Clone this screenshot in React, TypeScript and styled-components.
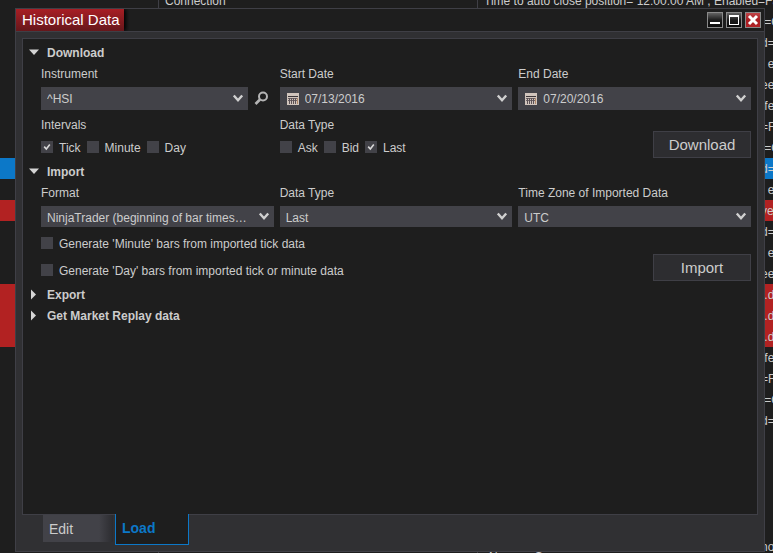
import React, { useState } from "react";
import styled, { createGlobalStyle, css } from "styled-components";

const color = {
  base: "#1e1e1e",
  frame: "#303033",
  line: "#3f3f46",
  field: "#424248",
  text: "#cccccc",
  blue: "#0c78c8",
  red: "#b22222",
};

const Global = createGlobalStyle`
  *, *::before, *::after { box-sizing: border-box; }
  html, body, #root { height: 100%; margin: 0; }
  body {
    background: ${color.base};
    color: ${color.text};
    font: 12px/22px "Liberation Sans", Arial, sans-serif;
    overflow: hidden;
  }
  button, input, select { font: inherit; color: inherit; margin: 0; }
`;

/* ---------- log behind the window ---------- */

const Desktop = styled.div`
  position: relative;
  height: 100%;
  min-height: 400px;
  overflow: hidden;
`;

const Log = styled.div`
  margin-top: -10px;
`;

type Tone = "plain" | "blue" | "red";

const LogRow = styled.div<{ $tone: Tone }>`
  display: grid;
  grid-template-columns: 158px 319px minmax(0, 1fr) 12px;
  grid-template-rows: 21px;
  height: 21px;
  white-space: pre;
  background: ${(p) =>
    p.$tone === "blue" ? color.blue : p.$tone === "red" ? color.red : color.base};
`;

const LogCell = styled.span`
  padding-left: 6px;
  overflow: hidden;
  border-left: 1px solid ${color.line};
  &:first-child {
    border-left: 0;
  }
`;

const WideCell = styled(LogCell)`
  grid-column: 3 / 5;
`;

const LogTail = styled.span`
  grid-column: 4;
  overflow: hidden;
`;

const NextLine = styled.div`
  margin-top: -11px;
  padding-left: 489px;
  white-space: pre;
`;

const tails: { text: string; tone?: Tone }[] = [
  { text: " =G" },
  { text: "d=" },
  { text: "  e" },
  { text: "ee" },
  { text: " fe" },
  { text: "=F" },
  { text: " =G" },
  { text: "d=", tone: "blue" },
  { text: "  e" },
  { text: "ve", tone: "red" },
  { text: "d=" },
  { text: "  e" },
  { text: "ee" },
  { text: " .d", tone: "red" },
  { text: " .d", tone: "red" },
  { text: " .d", tone: "red" },
  { text: " fe" },
  { text: "=F" },
  { text: " =G" },
  { text: "d=" },
  { text: "" },
  { text: "" },
  { text: "" },
  { text: "" },
  { text: "" },
  { text: "no" },
];

/* ---------- window frame ---------- */

const Window = styled.main`
  position: absolute;
  inset: 8px 8px 1px 15px;
  display: flex;
  flex-direction: column;
  background: ${color.frame};
  border: 1px solid ${color.line};
`;

const TitleBar = styled.header`
  display: flex;
  justify-content: space-between;
  height: 23px;
  background: ${color.base};
  border-bottom: 1px solid ${color.line};
`;

const Title = styled.h1`
  margin: 0;
  padding: 0 4px 0 6px;
  font-size: 15px;
  font-weight: 400;
  line-height: 22px;
  color: #fff;
  background: linear-gradient(#a81e24, #66171b);
  box-shadow: 2px 0 4px #000;
  clip-path: inset(0 -6px 0 0);
`;

const WindowButtons = styled.div`
  display: flex;
  gap: 3px;
  padding: 3px 3px 0 0;
`;

const WindowButton = styled.button<{ $close?: boolean }>`
  width: 16px;
  height: 16px;
  padding: 0;
  border: 1px solid #8a8a8a;
  background: ${(p) =>
    p.$close
      ? "linear-gradient(#c04448, #a81c20 50%, #b02226)"
      : "linear-gradient(#626262, #1c1c1c 50%, #0c0c0c)"};
  svg {
    display: block;
  }
`;

const Panel = styled.div`
  flex: 1;
  min-height: 0;
  margin: 6px 6px 0;
  padding: 3px 6px 0 0;
  background: ${color.base};
  border: 1px solid ${color.line};
`;

const Tabs = styled.nav`
  display: flex;
  align-items: flex-start;
  gap: 2px;
  margin-top: -1px;
  padding: 0 27px 6px;
`;

const Tab = styled.button<{ $active?: boolean }>`
  min-width: 70px;
  height: 27px;
  margin-top: 1px;
  padding: 0 6px;
  border: 0;
  text-align: left;
  font-size: 14px;
  background: linear-gradient(90deg, ${color.field} 80%, #2c2c30);
  ${(p) =>
    p.$active &&
    css`
      min-width: 74px;
      height: 31px;
      margin-top: 0;
      padding-bottom: 2px;
      color: ${color.blue};
      font-weight: 700;
      background: ${color.base};
      border: 1px solid ${color.blue};
      border-top: 0;
    `}
`;

/* ---------- form ---------- */

const SectionButton = styled.button`
  display: flex;
  align-items: center;
  gap: 7px;
  height: 21px;
  padding: 1px 0 0 5px;
  border: 0;
  background: none;
  font-weight: 700;
`;

const SectionBody = styled.div`
  display: grid;
  grid-template-columns: repeat(3, minmax(0, 1fr));
  column-gap: 6px;
  margin: 0 0 3px 18px;
`;

const Field = styled.div`
  display: flex;
  flex-direction: column;
  gap: 3px;
`;

const FieldLabel = styled.label`
  height: 21px;
`;

const ControlLine = styled.div`
  display: flex;
  align-items: center;
  gap: 6px;
  padding-right: 5px;
`;

const Control = styled.div<{ $tall?: boolean }>`
  display: grid;
  grid-template-columns: minmax(0, 1fr);
  grid-template-rows: 100%;
  flex: 1 0 auto;
  align-items: center;
  height: ${(p) => (p.$tall ? 23 : 21)}px;
  background: ${color.field};
  & > * {
    grid-area: 1 / 1;
  }
  & > svg {
    justify-self: end;
    margin-right: 4px;
    pointer-events: none;
  }
`;

const Select = styled.select`
  appearance: none;
  width: 100%;
  height: 100%;
  padding: 1px 25px 0 6px;
  border: 0;
  border-radius: 0;
  background: transparent;
  text-overflow: ellipsis;
  option {
    background: ${color.field};
  }
`;

const DateLabel = styled.label`
  display: flex;
  align-items: center;
  gap: 6px;
  padding: 0 20px 0 7px;
`;

const DateInput = styled.input`
  flex: 1;
  min-width: 0;
  height: 21px;
  padding: 1px 0 0;
  border: 0;
  background: transparent;
`;

const IconButton = styled.button`
  display: flex;
  padding: 0;
  border: 0;
  background: none;
`;

const CheckGroup = styled.fieldset`
  min-width: 0;
  margin: 4px 0 0;
  padding: 0;
  border: 0;
`;

const Legend = styled.legend`
  height: 21px;
  padding: 0;
  margin-bottom: 2px;
`;

const CheckRow = styled.div`
  display: flex;
  gap: 6px;
`;

const CheckColumn = styled.div`
  display: flex;
  flex-direction: column;
  grid-column: span 2;
  gap: 6px;
  margin-top: 6px;
`;

const CheckLabel = styled.label`
  display: flex;
  gap: 6px;
  height: 21px;
`;

const CheckBox = styled.span`
  display: grid;
  width: 12px;
  height: 12px;
  margin-top: 4px;
  background: ${color.field};
  & > * {
    grid-area: 1 / 1;
  }
  svg {
    visibility: hidden;
    pointer-events: none;
  }
  input:checked + svg {
    visibility: visible;
  }
`;

const CheckInput = styled.input`
  appearance: none;
  width: 12px;
  height: 12px;
`;

const ActionButton = styled.button`
  align-self: end;
  justify-self: end;
  min-width: 98px;
  height: 27px;
  padding: 0 12px;
  border: 1px solid ${color.line};
  background: #2d2d30;
  font-size: 15px;
`;

/* ---------- icons ---------- */

const Chevron = () => (
  <svg width="12" height="9" viewBox="0 0 12 9" aria-hidden="true">
    <path d="M1.8 1.5 6 6.2l4.2-4.7" fill="none" stroke="#d0d0d0" strokeWidth="2.4" />
  </svg>
);

const Triangle = ({ open }: { open: boolean }) => (
  <svg width="12" height="12" viewBox="0 0 12 12" aria-hidden="true">
    <path d={open ? "M1 2.5h10L6 8z" : "M3 0.5v10l5-5z"} fill="#d4d4d4" />
  </svg>
);

const Calendar = () => (
  <svg width="12" height="12" viewBox="0 0 12 12" aria-hidden="true">
    <path d="M0 0h12v12H0z" fill="#d0c4bc" />
    <path d="M1 3h10v1H1z" fill="#3c363a" />
    <path d="M1 5h10v1H1zM1 7h10v1H1z" fill="#6c6266" />
    <path d="M2 5h1v6H2zM4 5h1v6H4zM6 5h1v6H6zM8 5h1v6H8z" fill="#5c5256" />
    <path d="M10 5h1v6h-1z" fill="#b08868" />
  </svg>
);

const Magnifier = () => (
  <svg width="15" height="15" viewBox="0 0 15 15" aria-hidden="true">
    <circle cx="9" cy="5.5" r="4" fill="none" stroke="#b4b4b4" strokeWidth="2" />
    <path d="M6 8.5 1.5 13" stroke="#b4b4b4" strokeWidth="2.6" />
  </svg>
);

const Tick = () => (
  <svg width="12" height="12" viewBox="0 0 12 12" aria-hidden="true">
    <path d="M3.2 5.6 5.3 8 8.8 3.4" fill="none" stroke="#d8d8d8" strokeWidth="1.6" />
  </svg>
);

/* ---------- composed parts ---------- */

function Section({
  title,
  startOpen = false,
  children,
}: {
  title: string;
  startOpen?: boolean;
  children?: React.ReactNode;
}) {
  const [open, setOpen] = useState(startOpen);
  return (
    <section>
      <SectionButton type="button" aria-expanded={open} onClick={() => setOpen(!open)}>
        <Triangle open={open} />
        {title}
      </SectionButton>
      {open && children && <SectionBody>{children}</SectionBody>}
    </section>
  );
}

function Check({ label, checked = false }: { label: string; checked?: boolean }) {
  return (
    <CheckLabel>
      <CheckBox>
        <CheckInput type="checkbox" defaultChecked={checked} />
        <Tick />
      </CheckBox>
      {label}
    </CheckLabel>
  );
}

function SelectField({ id, label, value }: { id: string; label: string; value: string }) {
  return (
    <Field>
      <FieldLabel htmlFor={id}>{label}</FieldLabel>
      <Control>
        <Select id={id}>
          <option>{value}</option>
        </Select>
        <Chevron />
      </Control>
    </Field>
  );
}

function DateField({ id, label, value }: { id: string; label: string; value: string }) {
  return (
    <Field>
      <FieldLabel htmlFor={id}>{label}</FieldLabel>
      <Control $tall>
        <DateLabel htmlFor={id}>
          <Calendar />
          <DateInput id={id} type="text" defaultValue={value} />
        </DateLabel>
        <Chevron />
      </Control>
    </Field>
  );
}

export default function App() {
  return (
    <>
      <Global />
      <Desktop>
        <Log>
          <LogRow $tone="plain">
            <LogCell />
            <LogCell>Connection</LogCell>
            <WideCell>Time to auto close position= 12:00:00 AM , Enabled=False</WideCell>
          </LogRow>
          {tails.map((row, i) => (
            <LogRow key={i} $tone={row.tone ?? "plain"}>
              <LogCell />
              <LogCell />
              <LogCell />
              <LogTail>{row.text}</LogTail>
            </LogRow>
          ))}
          <NextLine>Name = S</NextLine>
        </Log>

        <Window>
          <TitleBar>
            <Title>Historical Data</Title>
            <WindowButtons>
              <WindowButton type="button" aria-label="Minimize">
                <svg width="14" height="14" viewBox="0 0 14 14">
                  <path d="M2 9h10v2H2z" fill="#fff" />
                </svg>
              </WindowButton>
              <WindowButton type="button" aria-label="Maximize">
                <svg width="14" height="14" viewBox="0 0 14 14">
                  <path d="M2 2h10v10H2zM3 4v7h8V4z" fill="#fff" fillRule="evenodd" />
                </svg>
              </WindowButton>
              <WindowButton type="button" aria-label="Close" $close>
                <svg width="14" height="14" viewBox="0 0 14 14">
                  <path d="m3 3 8 8M11 3l-8 8" stroke="#fff" strokeWidth="3" />
                </svg>
              </WindowButton>
            </WindowButtons>
          </TitleBar>

          <Panel>
            <Section title="Download" startOpen>
              <Field>
                <FieldLabel htmlFor="instrument">Instrument</FieldLabel>
                <ControlLine>
                  <Control $tall>
                    <Select id="instrument">
                      <option>^HSI</option>
                    </Select>
                    <Chevron />
                  </Control>
                  <IconButton type="button" aria-label="Search instrument">
                    <Magnifier />
                  </IconButton>
                </ControlLine>
              </Field>
              <DateField id="start" label="Start Date" value="07/13/2016" />
              <DateField id="end" label="End Date" value="07/20/2016" />
              <CheckGroup>
                <Legend>Intervals</Legend>
                <CheckRow>
                  <Check label="Tick" checked />
                  <Check label="Minute" />
                  <Check label="Day" />
                </CheckRow>
              </CheckGroup>
              <CheckGroup>
                <Legend>Data Type</Legend>
                <CheckRow>
                  <Check label="Ask" />
                  <Check label="Bid" />
                  <Check label="Last" checked />
                </CheckRow>
              </CheckGroup>
              <ActionButton type="button">Download</ActionButton>
            </Section>

            <Section title="Import" startOpen>
              <SelectField
                id="format"
                label="Format"
                value="NinjaTrader (beginning of bar timestamps)"
              />
              <SelectField id="import-type" label="Data Type" value="Last" />
              <SelectField id="zone" label="Time Zone of Imported Data" value="UTC" />
              <CheckColumn>
                <Check label="Generate 'Minute' bars from imported tick data" />
                <Check label="Generate 'Day' bars from imported tick or minute data" />
              </CheckColumn>
              <ActionButton type="button">Import</ActionButton>
            </Section>

            <Section title="Export" />
            <Section title="Get Market Replay data" />
          </Panel>

          <Tabs>
            <Tab type="button">Edit</Tab>
            <Tab type="button" $active aria-current="page">
              Load
            </Tab>
          </Tabs>
        </Window>
      </Desktop>
    </>
  );
}
